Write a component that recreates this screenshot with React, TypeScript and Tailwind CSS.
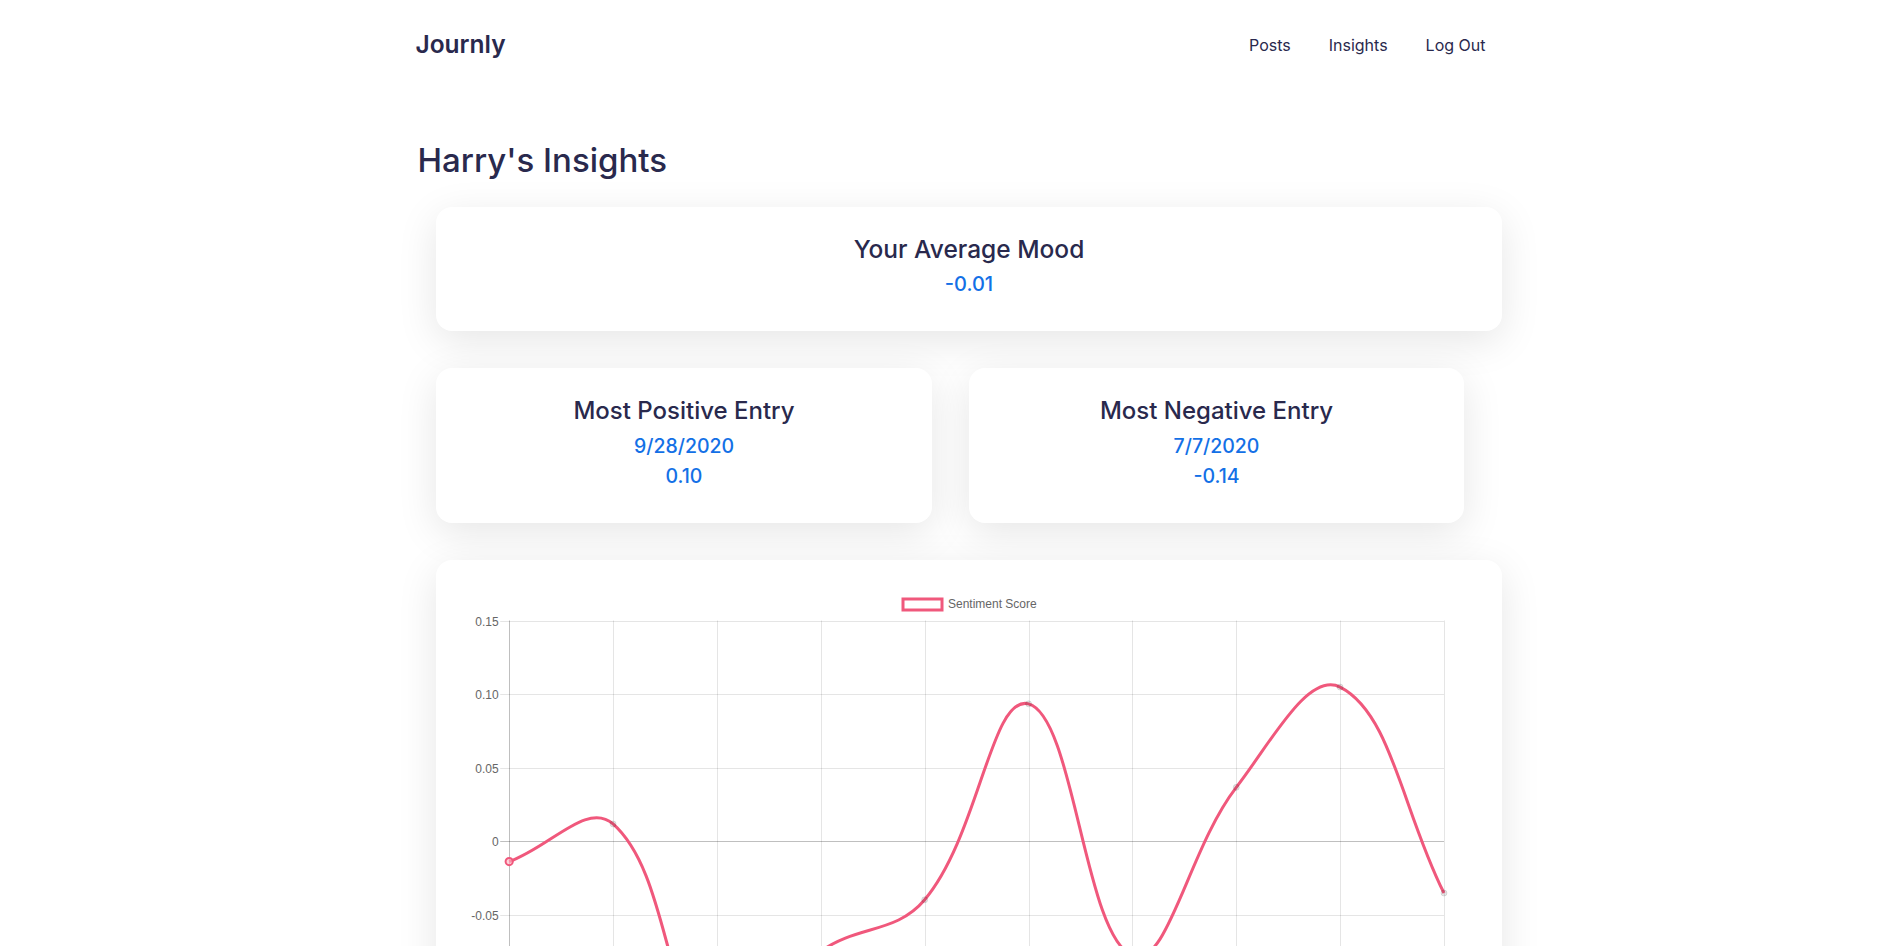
import React from "react";

const PINK = "#f0587c";
const VALS = [-0.014, 0.0116, -0.14, -0.075, -0.04, 0.0933, -0.078, 0.0365, 0.1047, -0.0354];

type P = { x: number; y: number };

function SentimentChart() {
  const left = 73.2;
  const right = 1008;
  const step = (right - left) / 9;
  const zeroY = 281;
  const scale = 1470;
  const top = zeroY - 0.15 * scale;
  const bottom = zeroY + 0.15 * scale;
  const pts: P[] = VALS.map((v, i) => ({ x: left + i * step, y: zeroY - v * scale }));
  const t = 0.4;
  const cps = pts.map((p, i) => {
    const prev = pts[i - 1] ?? p;
    const next = pts[i + 1] ?? p;
    const d01 = Math.hypot(p.x - prev.x, p.y - prev.y);
    const d12 = Math.hypot(next.x - p.x, next.y - p.y);
    let s01 = d01 / (d01 + d12);
    let s12 = d12 / (d01 + d12);
    if (isNaN(s01)) s01 = 0;
    if (isNaN(s12)) s12 = 0;
    const fa = t * s01;
    const fb = t * s12;
    return {
      prev: { x: p.x - fa * (next.x - prev.x), y: p.y - fa * (next.y - prev.y) },
      next: { x: p.x + fb * (next.x - prev.x), y: p.y + fb * (next.y - prev.y) },
    };
  });
  const cap = (c: P): P => ({
    x: Math.min(Math.max(c.x, left), right),
    y: Math.min(Math.max(c.y, top), bottom),
  });
  let d = `M${pts[0].x},${pts[0].y}`;
  for (let i = 1; i < pts.length; i++) {
    const a = cap(cps[i - 1].next);
    const b = cap(cps[i].prev);
    d += ` C${a.x},${a.y} ${b.x},${b.y} ${pts[i].x},${pts[i].y}`;
  }
  const ticks = [0.15, 0.1, 0.05, 0, -0.05, -0.1, -0.15];
  const labels = ["0.15", "0.10", "0.05", "0", "-0.05", "-0.10", "-0.15"];
  const dates = ["6/15/2020", "6/29/2020", "7/7/2020", "7/20/2020", "8/3/2020", "8/17/2020", "8/31/2020", "9/14/2020", "9/28/2020", "10/5/2020"];

  return (
    <svg width="1066" height="560" viewBox="0 0 1066 560" className="block">
      <rect x="467" y="39" width="39" height="11" fill="white" stroke={PINK} strokeWidth="3" />
      <text x="512" y="48.3" fontSize="12" fill="#666" fontFamily="'Liberation Sans', Arial, sans-serif">
        Sentiment Score
      </text>
      {ticks.map((v, i) => {
        const y = Math.round(zeroY - v * scale) + 0.5;
        return (
          <g key={i}>
            <line x1={left - 9} x2={right} y1={y} y2={y} stroke={v === 0 ? "rgba(0,0,0,0.25)" : "rgba(0,0,0,0.1)"} strokeWidth="1" />
            <text x={left - 10.5} y={y + 4} fontSize="12" fill="#666" textAnchor="end" fontFamily="'Liberation Sans', Arial, sans-serif">
              {labels[i]}
            </text>
          </g>
        );
      })}
      {pts.map((p, i) => {
        const x = Math.round(p.x) + 0.5;
        return (
          <g key={i}>
            <line x1={x} x2={x} y1={top} y2={bottom + 10} stroke={i === 0 ? "rgba(0,0,0,0.25)" : "rgba(0,0,0,0.1)"} strokeWidth="1" />
            <text x={x} y={bottom + 26} fontSize="12" fill="#666" textAnchor="middle" fontFamily="'Liberation Sans', Arial, sans-serif">
              {dates[i]}
            </text>
          </g>
        );
      })}
      <path d={d} fill="none" stroke={PINK} strokeWidth="3" />
      {pts.map((p, i) =>
        i === 0 ? (
          <circle key={i} cx={p.x} cy={p.y} r="3.6" fill="rgba(255,180,195,0.6)" stroke={PINK} strokeWidth="2" />
        ) : (
          <circle key={i} cx={p.x} cy={p.y} r="3" fill="rgba(0,0,0,0.1)" stroke="rgba(0,0,0,0.1)" strokeWidth="1" />
        )
      )}
    </svg>
  );
}

const card = "rounded-2xl bg-white shadow-[0_10px_40px_rgba(0,0,0,0.1)]";

export default function App() {
  return (
    <div className="min-h-screen bg-white text-[#29294d] [font-family:Inter,'Noto_Sans',sans-serif]">
      <header className="mx-auto flex h-[89px] w-[1070px] items-center justify-between">
        <div className="text-[24.5px] font-semibold leading-none">Journly</div>
        <nav className="flex items-center gap-[38px] text-[16px] leading-none">
          <a>Posts</a>
          <a>Insights</a>
          <a>Log Out</a>
        </nav>
      </header>
      <main className="mx-auto w-[1070px] pb-10">
        <h1 className="ml-[2px] mt-[47px] text-[33px] font-medium leading-[48px]">Harry's Insights</h1>
        <div className="ml-[20.5px] mt-[22.5px] flex flex-col gap-[37px]">
          <section className={`flex h-[124px] w-[1066px] flex-col items-center pt-[24px] ${card}`}>
            <h2 className="text-[24.5px] font-medium leading-[36px]">Your Average Mood</h2>
            <p className="mt-[2px] text-[20px] font-medium leading-[30px] text-[#1370e6]">-0.01</p>
          </section>
          <div className="flex gap-[37px]">
            <section className={`flex h-[155px] w-[496px] flex-col items-center pt-[25px] ${card}`}>
              <h2 className="text-[24px] font-medium leading-[36px]">Most Positive Entry</h2>
              <p className="mt-[2px] text-[19.5px] font-medium leading-[30px] text-[#1370e6]">9/28/2020</p>
              <p className="text-[19.5px] font-medium leading-[31px] text-[#1370e6]">0.10</p>
            </section>
            <section className={`flex h-[155px] w-[495px] flex-col items-center pt-[25px] ${card}`}>
              <h2 className="text-[24px] font-medium leading-[36px]">Most Negative Entry</h2>
              <p className="mt-[2px] text-[19.5px] font-medium leading-[30px] text-[#1370e6]">7/7/2020</p>
              <p className="text-[19.5px] font-medium leading-[31px] text-[#1370e6]">-0.14</p>
            </section>
          </div>
          <section className={`w-[1066px] overflow-hidden ${card}`}>
            <SentimentChart />
          </section>
        </div>
      </main>
    </div>
  );
}
